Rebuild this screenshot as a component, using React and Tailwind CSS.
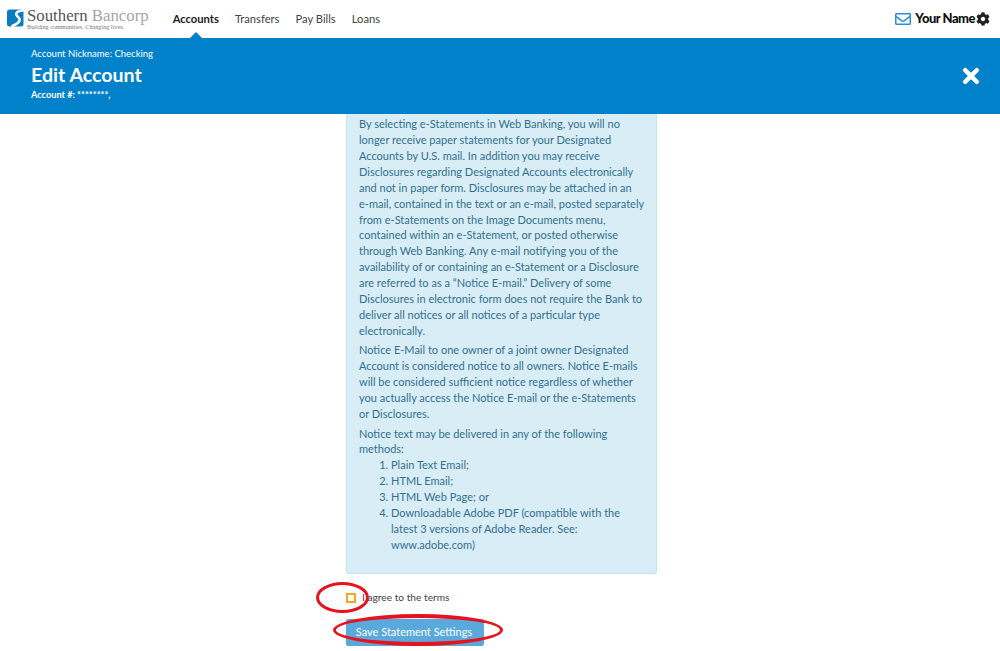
import React from "react";
import { FaCog, FaRegEnvelope, FaTimes } from "react-icons/fa";

const Logo = () => (
  <div className="flex items-start gap-[3px]">
    <svg width="17" height="18" viewBox="0 0 17 18" className="shrink-0">
      <rect x="0" y="0.5" width="16.5" height="17" rx="2.5" fill="#0a7cc4" />
      <path d="M16.5 1.5 C11 1.5 8.5 3.5 9.5 6 C10.5 8.5 13.5 9 12.5 11.5 C11.5 14.5 8 15.5 4.5 17.5" fill="none" stroke="#fff" strokeWidth="2.6" />
    </svg>
    <div className="-mt-[2px] flex flex-col font-['Liberation_Serif',serif] text-[#6b6b6b]">
      <div className="text-[16.8px] leading-[17px] whitespace-nowrap">
        <span className="text-[#555]">Southern</span> <span className="text-[#a5a5a5]">Bancorp</span>
      </div>
      <div className="text-[6.2px] leading-[6px] whitespace-nowrap text-[#777]">Building communities. Changing lives.</div>
    </div>
  </div>
);

const NavItem = ({ children, active }) => (
  <a className={active ? "relative font-bold text-[#222] flex items-center h-full" : "text-[#444] flex items-center h-full"}>
    {children}
    {active && (
      <span className="absolute bottom-0 left-1/2 -translate-x-1/2 w-0 h-0 border-l-[6px] border-r-[6px] border-b-[6px] border-l-transparent border-r-transparent border-b-[#0081c9]" />
    )}
  </a>
);

export default function App() {
  return (
    <div className="relative h-[651px] w-[1000px] overflow-hidden bg-white font-['Lato',sans-serif]">
      <header className="flex h-[38px] items-center justify-between pl-[7px] pr-[10px]">
        <div className="flex h-full items-center">
          <Logo />
          <nav className="ml-[24px] flex h-full gap-[16px] text-[11.2px]">
            <NavItem active>Accounts</NavItem>
            <NavItem>Transfers</NavItem>
            <NavItem>Pay Bills</NavItem>
            <NavItem>Loans</NavItem>
          </nav>
        </div>
        <div className="flex items-center gap-[4px]">
          <FaRegEnvelope size={16} className="text-[#2f8fd6]" />
          <span className="text-[13px] font-black text-[#111] tracking-[-0.5px]">Your Name</span>
          <FaCog size={14} className="-ml-[3px] text-[#222]" />
        </div>
      </header>

      <section className="flex h-[76px] items-center justify-between bg-[#0081c9] pl-[31px] pr-[17px] pb-[3px] text-white">
        <div className="flex flex-col">
          <div className="text-[9.5px] leading-[14px]">Account Nickname: Checking</div>
          <h1 className="text-[19.6px] font-bold leading-[27px]">Edit Account</h1>
          <div className="text-[9.2px] font-bold leading-[14px]">Account #: ********,</div>
        </div>
        <FaTimes size={24} className="mt-[3px]" />
      </section>

      <main className="ml-[346px] w-[311px]">
        <div className="rounded-b-[3px] border border-t-0 border-[#bce8f1] bg-[#d9edf7] px-[12px] pt-[2px] pb-[20px] text-[11px] leading-[15.92px] text-[#31708f]">
          <p className="mb-[3.5px]">
            By selecting e-Statements in Web Banking, you will no longer receive paper statements for your Designated Accounts by U.S. mail. In addition you may receive Disclosures regarding Designated Accounts electronically and not in paper form. Disclosures may be attached in an e-mail, contained in the text or an e-mail, posted separately from e-Statements on the Image Documents menu, contained within an e-Statement, or posted otherwise through Web Banking. Any e-mail notifying you of the availability of or containing an e-Statement or a Disclosure are referred to as a “Notice E-mail.” Delivery of some Disclosures in electronic form does not require the Bank to deliver all notices or all notices of a particular type electronically.
          </p>
          <p className="mb-[3.5px]">
            Notice E-Mail to one owner of a joint owner Designated Account is considered notice to all owners. Notice E-mails will be considered sufficient notice regardless of whether you actually access the Notice E-mail or the e-Statements or Disclosures.
          </p>
          <p>Notice text may be delivered in any of the following methods:</p>
          <ol className="list-decimal pl-[32px]">
            <li>Plain Text Email;</li>
            <li>HTML Email;</li>
            <li>HTML Web Page; or</li>
            <li>Downloadable Adobe PDF (compatible with the latest 3 versions of Adobe Reader. See: www.adobe.com)</li>
          </ol>
        </div>

        <label className="mt-[16px] flex h-[16px] items-center gap-[6px] text-[10.2px] text-[#444]">
          <span className="h-[10px] w-[10px] border-2 border-[#f5a623]" />
          I agree to the terms
        </label>

        <button className="mt-[13px] h-[27px] w-[138px] rounded-[2px] bg-[#5aa9dc] pr-[2px] text-[11px] text-white">
          Save Statement Settings
        </button>
      </main>

      <div className="absolute left-[316px] top-[582px] h-[31px] w-[53px] rounded-[50%] border-[3px] border-[#e8111c]" />
      <div className="absolute left-[333px] top-[614px] h-[32px] w-[170px] rounded-[50%] border-x-[3px] border-y-[4px] border-[#e8111c]" />
    </div>
  );
}
